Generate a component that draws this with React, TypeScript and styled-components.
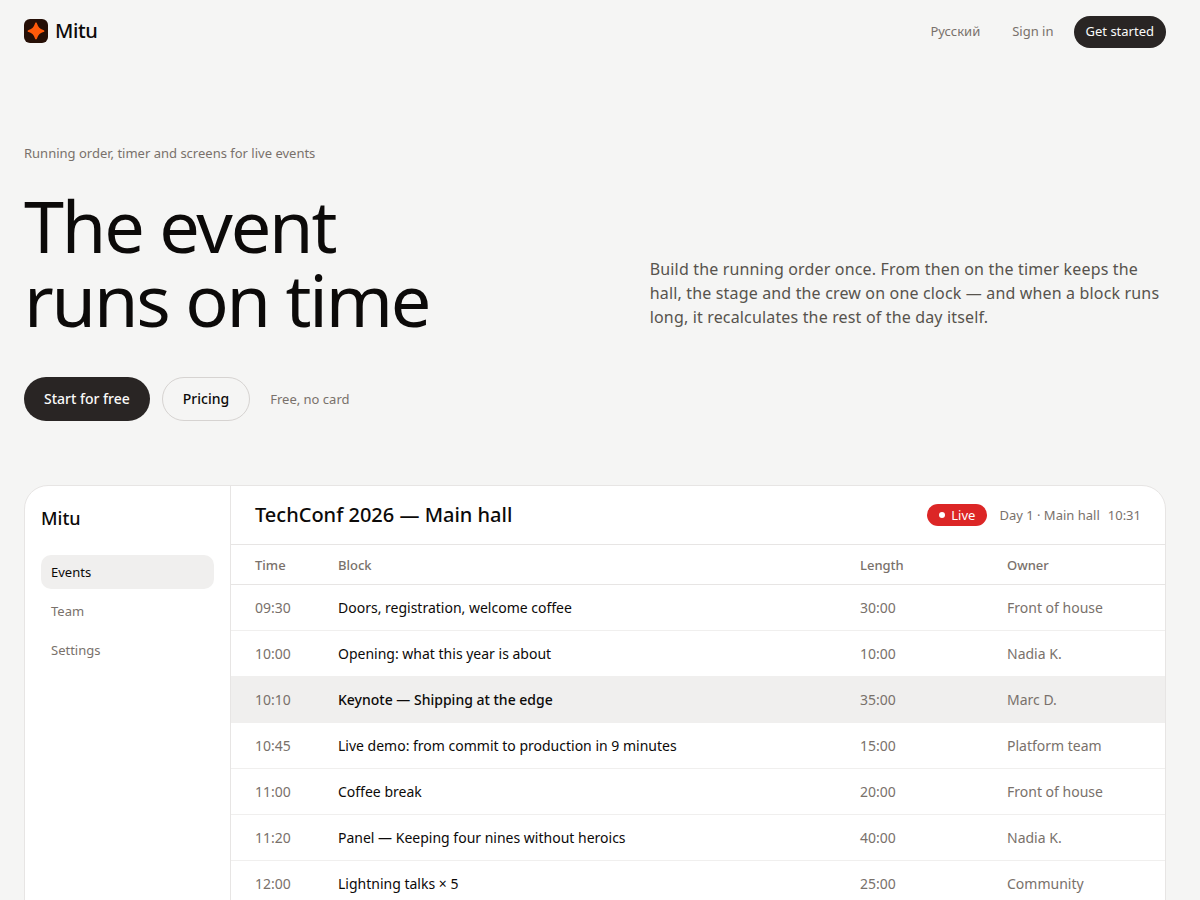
import React from "react";
import styled, { createGlobalStyle } from "styled-components";

const color = {
  page: "#f5f5f4",
  surface: "#ffffff",
  ink: "#0c0a09",
  body: "#57534d",
  muted: "#79716b",
  dark: "#292524",
  line: "#e7e5e4",
  faint: "#f0efee",
  outline: "#d6d3d1",
  live: "#dc2626",
};

const GlobalStyle = createGlobalStyle`
  *, *::before, *::after { box-sizing: border-box; }
  body {
    margin: 0;
    background: ${color.page};
    color: ${color.ink};
    font-family: "Noto Sans", sans-serif;
    font-size: 14px;
    line-height: 20px;
  }
  h1, h2, p { margin: 0; font-weight: 400; }
  a { color: inherit; text-decoration: none; }
  button { font-family: inherit; cursor: pointer; }
`;

const Page = styled.div`
  padding: 0 34px 64px 24px;
`;

const TopBar = styled.header`
  display: flex;
  align-items: center;
  justify-content: space-between;
  height: 64px;
`;

const Brand = styled.a`
  display: flex;
  align-items: center;
  gap: 7px;
  padding-bottom: 2px;
  font-size: 20px;
  line-height: 24px;
  font-weight: 500;
  letter-spacing: -0.02em;
`;

const TopNav = styled.nav`
  display: flex;
  align-items: center;
  gap: 8px;
`;

const TopLink = styled.a`
  padding: 6px 12px 8px;
  font-size: 13px;
  line-height: 18px;
  color: ${color.muted};
`;

const Button = styled.button<{ $tone: "dark" | "outline"; $size: "small" | "large" }>`
  height: ${(p) => (p.$size === "small" ? 32 : 44)}px;
  padding: ${(p) => (p.$size === "small" ? "0 12px 2px" : "0 20px")};
  border: ${(p) => (p.$tone === "dark" ? "0" : `1px solid ${color.outline}`)};
  border-radius: 22px;
  background: ${(p) => (p.$tone === "dark" ? color.dark : "transparent")};
  color: ${(p) => (p.$tone === "dark" ? "#fafaf9" : color.ink)};
  font-size: ${(p) => (p.$size === "small" ? 13 : 14)}px;
  font-weight: ${(p) => (p.$size === "small" ? 400 : 500)};
  line-height: 20px;
`;

const Hero = styled.section`
  padding: 80px 0 64px;
`;

const Note = styled.p`
  font-size: 13px;
  line-height: 18px;
  color: ${color.muted};
`;

const HeroGrid = styled.div`
  display: grid;
  grid-template-columns: 1.15fr 1fr;
  gap: 32px;
  align-items: end;
  margin: 26px 0 41px;
`;

const Headline = styled.h1`
  font-size: 72px;
  line-height: 74px;
  letter-spacing: -0.03em;
`;

const Lead = styled.p`
  padding-bottom: 7px;
  font-size: 16px;
  line-height: 24px;
  letter-spacing: 0.01em;
  color: ${color.body};
`;

const Actions = styled.div`
  display: flex;
  align-items: center;
  gap: 12px;

  ${Note} { margin-left: 8px; }
`;

const Card = styled.section`
  display: grid;
  grid-template-columns: 206px 1fr;
  min-height: 480px;
  overflow: hidden;
  border: 1px solid ${color.line};
  border-radius: 24px;
  background: ${color.surface};
`;

const Sidebar = styled.aside`
  padding: 20px 16px;
  border-right: 1px solid ${color.line};
`;

const SideTitle = styled.p`
  margin-bottom: 25px;
  font-size: 18px;
  line-height: 24px;
  font-weight: 500;
`;

const SideNav = styled.nav`
  display: flex;
  flex-direction: column;
  gap: 5px;
`;

const SideLink = styled.a<{ $active?: boolean }>`
  padding: 7px 10px;
  border-radius: 10px;
  background: ${(p) => (p.$active ? color.faint : "transparent")};
  color: ${(p) => (p.$active ? color.ink : color.muted)};
  font-size: 13px;
`;

const CardHead = styled.div`
  display: flex;
  align-items: center;
  justify-content: space-between;
  height: 59px;
  padding: 0 24px;
  border-bottom: 1px solid ${color.line};
`;

const CardTitle = styled.h2`
  font-size: 20px;
  line-height: 28px;
  font-weight: 500;
`;

const Status = styled.div`
  display: flex;
  align-items: center;
  gap: 12px;
  font-size: 13px;
  color: ${color.muted};
`;

const LiveBadge = styled.span`
  display: flex;
  align-items: center;
  gap: 6px;
  height: 22px;
  padding: 0 12px;
  border-radius: 11px;
  background: ${color.live};
  color: #ffffff;
`;

const Dot = styled.span`
  width: 6px;
  height: 6px;
  border-radius: 50%;
  background: #ffffff;
`;

const When = styled.span`
  display: flex;
  gap: 8px;
`;

const Schedule = styled.table`
  width: 100%;
  table-layout: fixed;
  border-collapse: separate;
  border-spacing: 0;
`;

const Col = styled.col<{ $width?: number }>`
  width: ${(p) => (p.$width ? `${p.$width}px` : "auto")};
`;

const Th = styled.th`
  height: 40px;
  padding: 0 16px;
  border-bottom: 1px solid ${color.line};
  color: ${color.muted};
  font-size: 13px;
  font-weight: 500;
  text-align: left;

  &:first-child { padding-left: 24px; }
`;

const Td = styled.td`
  padding: 12px 16px;
  border-bottom: 1px solid ${color.faint};
  color: ${color.muted};
  line-height: 21px;

  &:first-child { padding-left: 24px; }
`;

const BlockCell = styled(Td)`
  color: ${color.ink};
`;

const Row = styled.tr<{ $current: boolean }>`
  background: ${(p) => (p.$current ? color.faint : "transparent")};

  ${BlockCell} { font-weight: ${(p) => (p.$current ? 500 : 400)}; }
`;

const blocks = [
  ["09:30", "Doors, registration, welcome coffee", "30:00", "Front of house"],
  ["10:00", "Opening: what this year is about", "10:00", "Nadia K."],
  ["10:10", "Keynote — Shipping at the edge", "35:00", "Marc D."],
  ["10:45", "Live demo: from commit to production in 9 minutes", "15:00", "Platform team"],
  ["11:00", "Coffee break", "20:00", "Front of house"],
  ["11:20", "Panel — Keeping four nines without heroics", "40:00", "Nadia K."],
  ["12:00", "Lightning talks × 5", "25:00", "Community"],
];

const Logo = () => (
  <svg width="24" height="24" viewBox="0 0 24 24" aria-hidden="true">
    <rect width="24" height="24" rx="6" fill="#260f06" />
    <path
      d="M12 3.6C12.6 3.6 12.9 4.1 13.1 4.7C14.2 8.2 15.8 9.8 19.3 10.9C19.9 11.1 20.4 11.4 20.4 12C20.4 12.6 19.9 12.9 19.3 13.1C15.8 14.2 14.2 15.8 13.1 19.3C12.9 19.9 12.6 20.4 12 20.4C11.4 20.4 11.1 19.9 10.9 19.3C9.8 15.8 8.2 14.2 4.7 13.1C4.1 12.9 3.6 12.6 3.6 12C3.6 11.4 4.1 11.1 4.7 10.9C8.2 9.8 9.8 8.2 10.9 4.7C11.1 4.1 11.4 3.6 12 3.6Z"
      fill="#ff5a0a"
    />
  </svg>
);

export default function App() {
  return (
    <>
      <GlobalStyle />
      <Page>
        <TopBar>
          <Brand href="#">
            <Logo />
            Mitu
          </Brand>
          <TopNav>
            <TopLink href="#ru" lang="ru">Русский</TopLink>
            <TopLink href="#signin">Sign in</TopLink>
            <Button $tone="dark" $size="small">Get started</Button>
          </TopNav>
        </TopBar>
        <main>
          <Hero>
            <Note>Running order, timer and screens for live events</Note>
            <HeroGrid>
              <Headline>
                The event
                <br />
                runs on time
              </Headline>
              <Lead>
                Build the running order once. From then on the timer keeps the hall, the stage and
                the crew on one clock — and when a block runs long, it recalculates the rest of the
                day itself.
              </Lead>
            </HeroGrid>
            <Actions>
              <Button $tone="dark" $size="large">Start for free</Button>
              <Button $tone="outline" $size="large">Pricing</Button>
              <Note>Free, no card</Note>
            </Actions>
          </Hero>
          <Card>
            <Sidebar>
              <SideTitle>Mitu</SideTitle>
              <SideNav>
                <SideLink href="#events" $active>Events</SideLink>
                <SideLink href="#team">Team</SideLink>
                <SideLink href="#settings">Settings</SideLink>
              </SideNav>
            </Sidebar>
            <div>
              <CardHead>
                <CardTitle>TechConf 2026 — Main hall</CardTitle>
                <Status>
                  <LiveBadge>
                    <Dot />
                    Live
                  </LiveBadge>
                  <When>
                    <span>Day 1 · Main hall</span>
                    <time>10:31</time>
                  </When>
                </Status>
              </CardHead>
              <Schedule>
                <colgroup>
                  <Col $width={91} />
                  <Col />
                  <Col $width={147} />
                  <Col $width={174} />
                </colgroup>
                <thead>
                  <tr>
                    <Th scope="col">Time</Th>
                    <Th scope="col">Block</Th>
                    <Th scope="col">Length</Th>
                    <Th scope="col">Owner</Th>
                  </tr>
                </thead>
                <tbody>
                  {blocks.map(([time, name, length, owner]) => (
                    <Row key={time} $current={time === "10:10"}>
                      <Td>{time}</Td>
                      <BlockCell>{name}</BlockCell>
                      <Td>{length}</Td>
                      <Td>{owner}</Td>
                    </Row>
                  ))}
                </tbody>
              </Schedule>
            </div>
          </Card>
        </main>
      </Page>
    </>
  );
}
